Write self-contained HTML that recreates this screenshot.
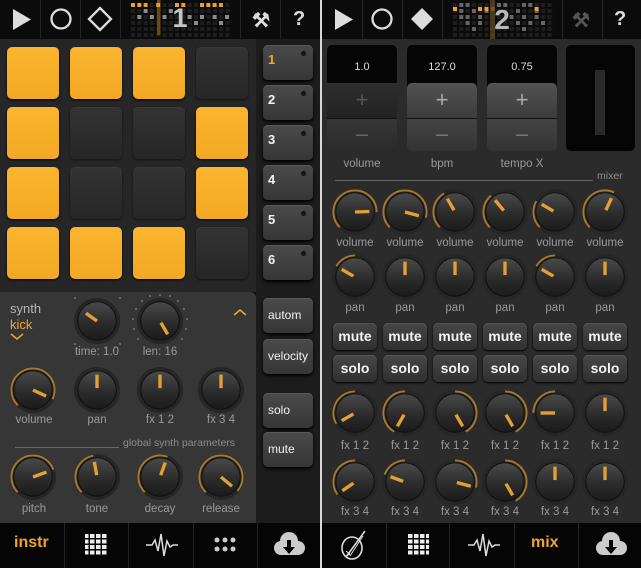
<!DOCTYPE html><html><head><meta charset="utf-8"><style>
*{margin:0;padding:0;box-sizing:border-box}
body{width:641px;height:568px;background:#111;position:relative;overflow:hidden;font-family:"Liberation Sans",sans-serif}
.a{position:absolute}
.top{position:absolute;top:0;height:39px;background:#0b0b0b}
.dv{position:absolute;top:0;width:1px;height:39px;background:#262626}
.pad{position:absolute;width:52px;height:52px;border-radius:5px}
.y{background:linear-gradient(#fbb52e,#f2a823);box-shadow:0 1px 2px #000}
.d{background:linear-gradient(#333,#262626);box-shadow:inset 0 1px 0 #3a3a3a,0 1px 2px #111}
.sb{position:absolute;left:263px;width:50px;height:35px;border-radius:5px;background:linear-gradient(#4a4a4a,#363636);box-shadow:0 2px 3px #000,inset 0 1px 0 #5a5a5a;color:#f2f2f2;font-weight:bold;font-size:13px;padding:7px 5px}
.sb i{position:absolute;right:7px;top:6px;width:5px;height:5px;border-radius:50%;background:#141414}
.sb2{font-weight:normal;font-size:12px;padding:0 5px;line-height:35px}
.k{position:absolute;width:48px;height:48px}
.l{position:absolute;color:#9a9a9a;font-size:11.5px;text-align:center;width:60px}
.bb{position:absolute;top:523px;height:45px;background:#050505}
.mb{position:absolute;width:44px;height:27px;border-radius:5px;background:linear-gradient(#474747,#303030);box-shadow:0 1px 2px #000,inset 0 1px 0 #555;color:#f4f4f4;font-weight:bold;font-size:14px;text-align:center;line-height:27px}
.box{position:absolute;top:45px;width:70px;height:106px;border-radius:5px;background:#050505;overflow:hidden}
.val{position:absolute;top:16px;width:100%;text-align:center;color:#ddd;font-size:11px}
.pm{position:absolute;left:0;width:70px;color:#aaa;font-size:22px;text-align:center}
</style></head><body>
<svg width="0" height="0" style="position:absolute"><defs>
<linearGradient id="kg" x1="0" y1="0" x2="0" y2="1"><stop offset="0" stop-color="#4a4a4a"/><stop offset="0.5" stop-color="#2e2e2e"/><stop offset="1" stop-color="#1a1a1a"/></linearGradient>
<g id="kb"><circle cx="25" cy="25" r="24" fill="#262626"/><circle cx="25" cy="25" r="20" fill="url(#kg)" stroke="#0e0e0e"/></g>
</defs></svg>

<!-- LEFT -->
<div class="a" style="left:0;top:39px;width:256px;height:253px;background:#262626"></div>
<div class="a" style="left:256px;top:39px;width:65px;height:484px;background:#1c1c1c"></div>
<div class="a" style="left:0;top:292px;width:256px;height:231px;background:#363636;border-top-right-radius:6px"></div>
<div class="top" style="left:0;width:321px"></div>
<div class="dv" style="left:40px"></div><div class="dv" style="left:80px"></div><div class="dv" style="left:120px"></div><div class="dv" style="left:240px"></div><div class="dv" style="left:280px"></div>
<svg class="a" style="left:0;top:0" width="320" height="39">
<polygon points="13,9 13,30 31,19.5" fill="#ddd"/>
<circle cx="61" cy="19" r="9.5" fill="none" stroke="#ddd" stroke-width="2.3"/>
<polygon points="100,8 111,19 100,30 89,19" fill="none" stroke="#ddd" stroke-width="2.3"/>
</svg>
<svg class="a" style="left:120px;top:0" width="120" height="39">
<defs><pattern id="gp" x="11" y="3" width="6.3" height="6" patternUnits="userSpaceOnUse"><rect width="4" height="4" fill="#1e1e1e"/></pattern></defs>
<rect x="11" y="3" width="101" height="36" fill="url(#gp)"/>
<rect x="37" y="0" width="3.5" height="35" fill="#6b4a16"/>
<g fill="#e9a12c"><rect x="11" y="3" width="4" height="4"/><rect x="17.3" y="3" width="4" height="4"/><rect x="23.6" y="3" width="4" height="4"/><rect x="36.2" y="3" width="4" height="4"/><rect x="55" y="3" width="4" height="4"/><rect x="61.3" y="3" width="4" height="4"/><rect x="80" y="3" width="4" height="4"/><rect x="86.3" y="3" width="4" height="4"/><rect x="92.6" y="3" width="4" height="4"/><rect x="98.9" y="3" width="4" height="4"/></g>
<g fill="#8a8a8a"><rect x="23.6" y="9" width="4" height="4"/><rect x="48.8" y="9" width="4" height="4"/><rect x="17.3" y="15" width="4" height="4"/><rect x="29.9" y="15" width="4" height="4"/><rect x="42.5" y="15" width="4" height="4"/><rect x="67.6" y="15" width="4" height="4"/><rect x="80" y="15" width="4" height="4"/><rect x="92.6" y="15" width="4" height="4"/><rect x="105" y="15" width="4" height="4"/><rect x="74" y="21" width="4" height="4"/><rect x="99" y="21" width="4" height="4"/></g>
<text x="60" y="27" text-anchor="middle" fill="#c4c4c4" font-size="27" font-weight="bold" font-family="Liberation Sans">1</text>
</svg>
<div class="a" style="left:252px;top:8px;color:#ddd;font-size:20px;font-weight:bold">⚒</div>
<div class="a" style="left:293px;top:8px;color:#ddd;font-size:20px;font-weight:bold">?</div>

<div class="pad y" style="left:7px;top:47px"></div><div class="pad y" style="left:70px;top:47px"></div><div class="pad y" style="left:133px;top:47px"></div><div class="pad d" style="left:196px;top:47px"></div>
<div class="pad y" style="left:7px;top:107px"></div><div class="pad d" style="left:70px;top:107px"></div><div class="pad d" style="left:133px;top:107px"></div><div class="pad y" style="left:196px;top:107px"></div>
<div class="pad y" style="left:7px;top:167px"></div><div class="pad d" style="left:70px;top:167px"></div><div class="pad d" style="left:133px;top:167px"></div><div class="pad y" style="left:196px;top:167px"></div>
<div class="pad y" style="left:7px;top:227px"></div><div class="pad y" style="left:70px;top:227px"></div><div class="pad y" style="left:133px;top:227px"></div><div class="pad d" style="left:196px;top:227px"></div>

<div class="sb" style="top:45px;color:#f2a82a">1<i></i></div>
<div class="sb" style="top:85px">2<i></i></div>
<div class="sb" style="top:125px">3<i></i></div>
<div class="sb" style="top:165px">4<i></i></div>
<div class="sb" style="top:205px">5<i></i></div>
<div class="sb" style="top:245px">6<i></i></div>
<div class="sb sb2" style="top:298px">autom</div>
<div class="sb sb2" style="top:339px">velocity</div>
<div class="sb sb2" style="top:393px">solo</div>
<div class="sb sb2" style="top:432px">mute</div>

<div class="a" style="left:10px;top:301px;color:#b5b5b5;font-size:13px">synth</div>
<div class="a" style="left:10px;top:317px;color:#f0a52a;font-size:13px">kick</div>
<svg class="a" style="left:10px;top:333px" width="14" height="8"><polyline points="1,1 7,6 13,1" fill="none" stroke="#f0a52a" stroke-width="1.5"/></svg>
<svg class="a" style="left:233px;top:308px" width="14" height="8"><polyline points="1,7 7,2 13,7" fill="none" stroke="#f0a52a" stroke-width="1.5"/></svg>

<svg class="a" style="left:66px;top:292px" width="62" height="60"><g fill="#777"><circle cx="9" cy="6" r="1"/><circle cx="54" cy="6" r="1"/><circle cx="9" cy="52" r="1"/><circle cx="54" cy="52" r="1"/></g></svg>
<svg class="a" style="left:128px;top:292px" width="64" height="62"><g fill="#777"><circle cx="32" cy="3" r="1"/><circle cx="22" cy="4" r="1"/><circle cx="42" cy="4" r="1"/><circle cx="14" cy="9" r="1"/><circle cx="50" cy="9" r="1"/><circle cx="8" cy="17" r="1"/><circle cx="56" cy="17" r="1"/><circle cx="5" cy="27" r="1"/><circle cx="59" cy="27" r="1"/><circle cx="6" cy="37" r="1"/><circle cx="58" cy="37" r="1"/><circle cx="10" cy="47" r="1"/><circle cx="54" cy="47" r="1"/></g></svg>
<svg class="k" style="left:73px;top:297px" viewBox="0 0 50 50"><use href="#kb"/><line x1="25" y1="25" x2="25" y2="11" stroke="#e3a033" stroke-width="3.5" transform="rotate(-55 25 25)"/></svg>
<svg class="k" style="left:136px;top:297px" viewBox="0 0 50 50"><use href="#kb"/><line x1="25" y1="23" x2="25" y2="9" stroke="#e3a033" stroke-width="3.5" transform="rotate(150 25 25)"/></svg>
<div class="l" style="left:67px;top:346px">time: 1.0</div><div class="l" style="left:130px;top:346px">len: 16</div>

<svg class="k" style="left:9px;top:366px" viewBox="0 0 50 50"><use href="#kb"/><circle cx="25" cy="25" r="22.5" fill="none" stroke="#a57a2c" stroke-width="2" stroke-dasharray="98.2 300" transform="rotate(-225 25 25)"/><line x1="25" y1="25" x2="25" y2="10" stroke="#e3a033" stroke-width="3.5" transform="rotate(115 25 25)"/></svg>
<svg class="k" style="left:73px;top:366px" viewBox="0 0 50 50"><use href="#kb"/><line x1="25" y1="23" x2="25" y2="9" stroke="#e3a033" stroke-width="3.5"/></svg>
<svg class="k" style="left:136px;top:366px" viewBox="0 0 50 50"><use href="#kb"/><line x1="25" y1="23" x2="25" y2="9" stroke="#e3a033" stroke-width="3.5"/></svg>
<svg class="k" style="left:197px;top:366px" viewBox="0 0 50 50"><use href="#kb"/><line x1="25" y1="23" x2="25" y2="9" stroke="#e3a033" stroke-width="3.5"/></svg>
<div class="l" style="left:4px;top:414px">volume</div><div class="l" style="left:67px;top:414px">pan</div><div class="l" style="left:130px;top:414px">fx 1 2</div><div class="l" style="left:191px;top:414px">fx 3 4</div>

<div class="a" style="left:15px;top:447px;width:104px;height:1px;background:#666"></div>
<div class="a" style="left:123px;top:437px;color:#8d8d8d;font-size:10.5px">global synth parameters</div>

<svg class="k" style="left:9px;top:453px" viewBox="0 0 50 50"><use href="#kb"/><circle cx="25" cy="25" r="22.5" fill="none" stroke="#a57a2c" stroke-width="2" stroke-dasharray="80.5 300" transform="rotate(-225 25 25)"/><line x1="25" y1="25" x2="25" y2="10" stroke="#e3a033" stroke-width="3.5" transform="rotate(70 25 25)"/></svg>
<svg class="k" style="left:73px;top:453px" viewBox="0 0 50 50"><use href="#kb"/><circle cx="25" cy="25" r="22.5" fill="none" stroke="#a57a2c" stroke-width="2" stroke-dasharray="49.1 300" transform="rotate(-225 25 25)"/><line x1="25" y1="23" x2="25" y2="9" stroke="#e3a033" stroke-width="3.5" transform="rotate(-10 25 25)"/></svg>
<svg class="k" style="left:136px;top:453px" viewBox="0 0 50 50"><use href="#kb"/><circle cx="25" cy="25" r="22.5" fill="none" stroke="#a57a2c" stroke-width="2" stroke-dasharray="60.9 300" transform="rotate(-225 25 25)"/><line x1="25" y1="23" x2="25" y2="9" stroke="#e3a033" stroke-width="3.5" transform="rotate(20 25 25)"/></svg>
<svg class="k" style="left:197px;top:453px" viewBox="0 0 50 50"><use href="#kb"/><circle cx="25" cy="25" r="22.5" fill="none" stroke="#a57a2c" stroke-width="2" stroke-dasharray="104.1 300" transform="rotate(-225 25 25)"/><line x1="25" y1="25" x2="25" y2="10" stroke="#e3a033" stroke-width="3.5" transform="rotate(130 25 25)"/></svg>
<div class="l" style="left:4px;top:503px">pitch</div><div class="l" style="left:67px;top:503px">tone</div><div class="l" style="left:130px;top:503px">decay</div><div class="l" style="left:191px;top:503px">release</div>

<div class="a" style="left:320px;top:0;width:2px;height:568px;background:#d8d8d8"></div>

<!-- RIGHT -->
<div class="a" style="left:322px;top:39px;width:319px;height:484px;background:#2b2b2b"></div>
<div class="top" style="left:322px;width:319px"></div>
<div class="dv" style="left:362px"></div><div class="dv" style="left:402px"></div><div class="dv" style="left:442px"></div><div class="dv" style="left:562px"></div><div class="dv" style="left:602px"></div>
<svg class="a" style="left:322px;top:0" width="120" height="39">
<polygon points="13,9 13,30 31,19.5" fill="#ddd"/>
<circle cx="60" cy="19" r="9.5" fill="none" stroke="#ddd" stroke-width="2.3"/>
<polygon points="100,8 111,19 100,30 89,19" fill="#ddd"/>
</svg>
<svg class="a" style="left:442px;top:0" width="120" height="39">
<rect x="11" y="3" width="101" height="36" fill="url(#gp)"/>
<g fill="#666"><rect x="17.3" y="3" width="4" height="4"/><rect x="23.6" y="3" width="4" height="4"/><rect x="55" y="3" width="4" height="4"/><rect x="61.3" y="3" width="4" height="4"/><rect x="80" y="3" width="4" height="4"/><rect x="86.3" y="3" width="4" height="4"/><rect x="17.3" y="9" width="4" height="4"/><rect x="29.9" y="9" width="4" height="4"/><rect x="42.5" y="9" width="4" height="4"/><rect x="74" y="9" width="4" height="4"/><rect x="92.6" y="9" width="4" height="4"/><rect x="17.3" y="15" width="4" height="4"/><rect x="23.6" y="15" width="4" height="4"/><rect x="36" y="15" width="4" height="4"/><rect x="67.6" y="15" width="4" height="4"/><rect x="80" y="15" width="4" height="4"/><rect x="92.6" y="15" width="4" height="4"/><rect x="23.6" y="21" width="4" height="4"/><rect x="36" y="21" width="4" height="4"/><rect x="74" y="21" width="4" height="4"/><rect x="86.3" y="21" width="4" height="4"/><rect x="99" y="21" width="4" height="4"/><rect x="29.9" y="27" width="4" height="4"/><rect x="80" y="27" width="4" height="4"/></g>
<g fill="#e9a12c"><rect x="11" y="7" width="4" height="4"/><rect x="36" y="7" width="4" height="4"/><rect x="42.5" y="7" width="4" height="4"/><rect x="48.8" y="7" width="4" height="4"/><rect x="92.6" y="7" width="4" height="4"/></g>
<rect x="48" y="0" width="5" height="39" fill="#5a4420" opacity="0.8"/>
<text x="60" y="29" text-anchor="middle" fill="#b8b8b8" font-size="28" font-weight="bold" font-family="Liberation Sans">2</text>
</svg>
<div class="a" style="left:572px;top:8px;color:#555;font-size:20px;font-weight:bold">⚒</div>
<div class="a" style="left:614px;top:8px;color:#ddd;font-size:20px;font-weight:bold">?</div>

<div class="box" style="left:327px"><div class="val">1.0</div>
<div class="a" style="left:0;top:38px;width:70px;height:35px;background:linear-gradient(#2e2e2e,#222)"></div><div class="pm" style="top:42px;color:#555">+</div>
<div class="a" style="left:0;top:73px;width:70px;height:33px;background:linear-gradient(#363636,#2b2b2b);border-top:1px solid #111"></div><div class="pm" style="top:76px;color:#666">–</div></div>
<div class="box" style="left:407px"><div class="val">127.0</div>
<div class="a" style="left:0;top:38px;width:70px;height:35px;border-radius:5px 5px 0 0;background:linear-gradient(#525252,#3c3c3c)"></div><div class="pm" style="top:42px">+</div>
<div class="a" style="left:0;top:73px;width:70px;height:33px;background:linear-gradient(#444,#333);border-top:1px solid #111"></div><div class="pm" style="top:76px;color:#777">–</div></div>
<div class="box" style="left:487px"><div class="val">0.75</div>
<div class="a" style="left:0;top:38px;width:70px;height:35px;border-radius:5px 5px 0 0;background:linear-gradient(#525252,#3c3c3c)"></div><div class="pm" style="top:42px">+</div>
<div class="a" style="left:0;top:73px;width:70px;height:33px;background:linear-gradient(#444,#333);border-top:1px solid #111"></div><div class="pm" style="top:76px;color:#777">–</div></div>
<div class="box" style="left:566px;width:69px"><div class="a" style="left:29px;top:25px;width:10px;height:65px;background:#2a2a2a"></div></div>
<div class="l" style="left:332px;top:158px">volume</div><div class="l" style="left:412px;top:158px">bpm</div><div class="l" style="left:492px;top:158px">tempo X</div>
<div class="a" style="left:335px;top:180px;width:258px;height:1px;background:#666"></div>
<div class="a" style="left:597px;top:170px;color:#8d8d8d;font-size:10.5px">mixer</div>

<svg class="k" style="left:331px;top:188px" viewBox="0 0 50 50"><use href="#kb"/><circle cx="25" cy="25" r="22.5" fill="none" stroke="#a57a2c" stroke-width="2" stroke-dasharray="88.4 300" transform="rotate(-225 25 25)"/><line x1="25" y1="25" x2="25" y2="10" stroke="#e3a033" stroke-width="3.5" transform="rotate(88 25 25)"/></svg>
<svg class="k" style="left:381px;top:188px" viewBox="0 0 50 50"><use href="#kb"/><circle cx="25" cy="25" r="22.5" fill="none" stroke="#a57a2c" stroke-width="2" stroke-dasharray="94.2 300" transform="rotate(-225 25 25)"/><line x1="25" y1="25" x2="25" y2="10" stroke="#e3a033" stroke-width="3.5" transform="rotate(105 25 25)"/></svg>
<svg class="k" style="left:431px;top:188px" viewBox="0 0 50 50"><use href="#kb"/><circle cx="25" cy="25" r="22.5" fill="none" stroke="#a57a2c" stroke-width="2" stroke-dasharray="41.2 300" transform="rotate(-225 25 25)"/><line x1="25" y1="23" x2="25" y2="9" stroke="#e3a033" stroke-width="3.5" transform="rotate(-30 25 25)"/></svg>
<svg class="k" style="left:481px;top:188px" viewBox="0 0 50 50"><use href="#kb"/><circle cx="25" cy="25" r="22.5" fill="none" stroke="#a57a2c" stroke-width="2" stroke-dasharray="37.3 300" transform="rotate(-225 25 25)"/><line x1="25" y1="23" x2="25" y2="9" stroke="#e3a033" stroke-width="3.5" transform="rotate(-40 25 25)"/></svg>
<svg class="k" style="left:531px;top:188px" viewBox="0 0 50 50"><use href="#kb"/><circle cx="25" cy="25" r="22.5" fill="none" stroke="#a57a2c" stroke-width="2" stroke-dasharray="29.5 300" transform="rotate(-225 25 25)"/><line x1="25" y1="23" x2="25" y2="9" stroke="#e3a033" stroke-width="3.5" transform="rotate(-60 25 25)"/></svg>
<svg class="k" style="left:581px;top:188px" viewBox="0 0 50 50"><use href="#kb"/><circle cx="25" cy="25" r="22.5" fill="none" stroke="#a57a2c" stroke-width="2" stroke-dasharray="62.8 300" transform="rotate(-225 25 25)"/><line x1="25" y1="23" x2="25" y2="9" stroke="#e3a033" stroke-width="3.5" transform="rotate(25 25 25)"/></svg>
<div class="l" style="left:325px;top:237px">volume</div><div class="l" style="left:375px;top:237px">volume</div><div class="l" style="left:425px;top:237px">volume</div><div class="l" style="left:475px;top:237px">volume</div><div class="l" style="left:525px;top:237px">volume</div><div class="l" style="left:575px;top:237px">volume</div>

<svg class="k" style="left:331px;top:253px" viewBox="0 0 50 50"><use href="#kb"/><circle cx="25" cy="25" r="22.5" fill="none" stroke="#a57a2c" stroke-width="2" stroke-dasharray="23.6 300" transform="rotate(-150 25 25)"/><line x1="25" y1="23" x2="25" y2="9" stroke="#e3a033" stroke-width="3.5" transform="rotate(-60 25 25)"/></svg>
<svg class="k" style="left:381px;top:253px" viewBox="0 0 50 50"><use href="#kb"/><line x1="25" y1="23" x2="25" y2="9" stroke="#e3a033" stroke-width="3.5"/></svg>
<svg class="k" style="left:431px;top:253px" viewBox="0 0 50 50"><use href="#kb"/><line x1="25" y1="23" x2="25" y2="9" stroke="#e3a033" stroke-width="3.5"/></svg>
<svg class="k" style="left:481px;top:253px" viewBox="0 0 50 50"><use href="#kb"/><line x1="25" y1="23" x2="25" y2="9" stroke="#e3a033" stroke-width="3.5"/></svg>
<svg class="k" style="left:531px;top:253px" viewBox="0 0 50 50"><use href="#kb"/><circle cx="25" cy="25" r="22.5" fill="none" stroke="#a57a2c" stroke-width="2" stroke-dasharray="23.6 300" transform="rotate(-150 25 25)"/><line x1="25" y1="23" x2="25" y2="9" stroke="#e3a033" stroke-width="3.5" transform="rotate(-60 25 25)"/></svg>
<svg class="k" style="left:581px;top:253px" viewBox="0 0 50 50"><use href="#kb"/><line x1="25" y1="23" x2="25" y2="9" stroke="#e3a033" stroke-width="3.5"/></svg>
<div class="l" style="left:325px;top:302px">pan</div><div class="l" style="left:375px;top:302px">pan</div><div class="l" style="left:425px;top:302px">pan</div><div class="l" style="left:475px;top:302px">pan</div><div class="l" style="left:525px;top:302px">pan</div><div class="l" style="left:575px;top:302px">pan</div>

<div class="mb" style="left:333px;top:323px">mute</div><div class="mb" style="left:383px;top:323px">mute</div><div class="mb" style="left:433px;top:323px">mute</div><div class="mb" style="left:483px;top:323px">mute</div><div class="mb" style="left:533px;top:323px">mute</div><div class="mb" style="left:583px;top:323px">mute</div>
<div class="mb" style="left:333px;top:355px">solo</div><div class="mb" style="left:383px;top:355px">solo</div><div class="mb" style="left:433px;top:355px">solo</div><div class="mb" style="left:483px;top:355px">solo</div><div class="mb" style="left:533px;top:355px">solo</div><div class="mb" style="left:583px;top:355px">solo</div>

<svg class="k" style="left:331px;top:389px" viewBox="0 0 50 50"><use href="#kb"/><circle cx="25" cy="25" r="22.5" fill="none" stroke="#a57a2c" stroke-width="2" stroke-dasharray="47.1 300" transform="rotate(-210 25 25)"/><line x1="25" y1="23" x2="25" y2="9" stroke="#e3a033" stroke-width="3.5" transform="rotate(-120 25 25)"/></svg>
<svg class="k" style="left:381px;top:389px" viewBox="0 0 50 50"><use href="#kb"/><circle cx="25" cy="25" r="22.5" fill="none" stroke="#a57a2c" stroke-width="2" stroke-dasharray="58.9 300" transform="rotate(-240 25 25)"/><line x1="25" y1="23" x2="25" y2="9" stroke="#e3a033" stroke-width="3.5" transform="rotate(-150 25 25)"/></svg>
<svg class="k" style="left:431px;top:389px" viewBox="0 0 50 50"><use href="#kb"/><circle cx="25" cy="25" r="22.5" fill="none" stroke="#a57a2c" stroke-width="2" stroke-dasharray="58.9 300" transform="rotate(-90 25 25)"/><line x1="25" y1="23" x2="25" y2="9" stroke="#e3a033" stroke-width="3.5" transform="rotate(150 25 25)"/></svg>
<svg class="k" style="left:481px;top:389px" viewBox="0 0 50 50"><use href="#kb"/><circle cx="25" cy="25" r="22.5" fill="none" stroke="#a57a2c" stroke-width="2" stroke-dasharray="58.9 300" transform="rotate(-90 25 25)"/><line x1="25" y1="23" x2="25" y2="9" stroke="#e3a033" stroke-width="3.5" transform="rotate(150 25 25)"/></svg>
<svg class="k" style="left:531px;top:389px" viewBox="0 0 50 50"><use href="#kb"/><circle cx="25" cy="25" r="22.5" fill="none" stroke="#a57a2c" stroke-width="2" stroke-dasharray="35.3 300" transform="rotate(-180 25 25)"/><line x1="25" y1="25" x2="25" y2="10" stroke="#e3a033" stroke-width="3.5" transform="rotate(-90 25 25)"/></svg>
<svg class="k" style="left:581px;top:389px" viewBox="0 0 50 50"><use href="#kb"/><line x1="25" y1="23" x2="25" y2="9" stroke="#e3a033" stroke-width="3.5"/></svg>
<div class="l" style="left:325px;top:440px">fx 1 2</div><div class="l" style="left:375px;top:440px">fx 1 2</div><div class="l" style="left:425px;top:440px">fx 1 2</div><div class="l" style="left:475px;top:440px">fx 1 2</div><div class="l" style="left:525px;top:440px">fx 1 2</div><div class="l" style="left:575px;top:440px">fx 1 2</div>

<svg class="k" style="left:331px;top:458px" viewBox="0 0 50 50"><use href="#kb"/><circle cx="25" cy="25" r="22.5" fill="none" stroke="#a57a2c" stroke-width="2" stroke-dasharray="49.1 300" transform="rotate(-215 25 25)"/><line x1="25" y1="23" x2="25" y2="9" stroke="#e3a033" stroke-width="3.5" transform="rotate(-125 25 25)"/></svg>
<svg class="k" style="left:381px;top:458px" viewBox="0 0 50 50"><use href="#kb"/><circle cx="25" cy="25" r="22.5" fill="none" stroke="#a57a2c" stroke-width="2" stroke-dasharray="27.5 300" transform="rotate(-160 25 25)"/><line x1="25" y1="23" x2="25" y2="9" stroke="#e3a033" stroke-width="3.5" transform="rotate(-70 25 25)"/></svg>
<svg class="k" style="left:431px;top:458px" viewBox="0 0 50 50"><use href="#kb"/><circle cx="25" cy="25" r="22.5" fill="none" stroke="#a57a2c" stroke-width="2" stroke-dasharray="41.2 300" transform="rotate(-90 25 25)"/><line x1="25" y1="23" x2="25" y2="8" stroke="#e3a033" stroke-width="3.5" transform="rotate(105 25 25)"/></svg>
<svg class="k" style="left:481px;top:458px" viewBox="0 0 50 50"><use href="#kb"/><circle cx="25" cy="25" r="22.5" fill="none" stroke="#a57a2c" stroke-width="2" stroke-dasharray="58.9 300" transform="rotate(-90 25 25)"/><line x1="25" y1="23" x2="25" y2="9" stroke="#e3a033" stroke-width="3.5" transform="rotate(150 25 25)"/></svg>
<svg class="k" style="left:531px;top:458px" viewBox="0 0 50 50"><use href="#kb"/><line x1="25" y1="23" x2="25" y2="9" stroke="#e3a033" stroke-width="3.5"/></svg>
<svg class="k" style="left:581px;top:458px" viewBox="0 0 50 50"><use href="#kb"/><line x1="25" y1="23" x2="25" y2="9" stroke="#e3a033" stroke-width="3.5"/></svg>
<div class="l" style="left:325px;top:506px">fx 3 4</div><div class="l" style="left:375px;top:506px">fx 3 4</div><div class="l" style="left:425px;top:506px">fx 3 4</div><div class="l" style="left:475px;top:506px">fx 3 4</div><div class="l" style="left:525px;top:506px">fx 3 4</div><div class="l" style="left:575px;top:506px">fx 3 4</div>

<div class="bb" style="left:0;width:320px"></div><div class="bb" style="left:322px;width:319px"></div>
<div class="a" style="left:64px;top:523px;width:1px;height:45px;background:#222"></div><div class="a" style="left:128px;top:523px;width:1px;height:45px;background:#222"></div><div class="a" style="left:193px;top:523px;width:1px;height:45px;background:#222"></div><div class="a" style="left:257px;top:523px;width:1px;height:45px;background:#222"></div>
<div class="a" style="left:386px;top:523px;width:1px;height:45px;background:#222"></div><div class="a" style="left:449px;top:523px;width:1px;height:45px;background:#222"></div><div class="a" style="left:514px;top:523px;width:1px;height:45px;background:#222"></div><div class="a" style="left:578px;top:523px;width:1px;height:45px;background:#222"></div>
<div class="a" style="left:14px;top:534px;color:#f0a52a;font-size:16px;font-weight:bold">instr</div>
<div class="a" style="left:531px;top:534px;color:#f0a52a;font-size:16px;font-weight:bold">mix</div>
<svg class="a" style="left:0;top:523px" width="641" height="45">
<defs><pattern id="gr" x="0" y="0" width="6" height="5.5" patternUnits="userSpaceOnUse"><rect width="4.5" height="4" fill="#eee"/></pattern></defs>
<rect x="85" y="11" width="22" height="22" fill="url(#gr)"/>
<rect x="407" y="11" width="22" height="22" fill="url(#gr)"/>
<polyline points="146,22 152,22 155,17 158,28 161,11 164,33 167,18 170,24 173,22 178,22" fill="none" stroke="#ddd" stroke-width="1.5"/>
<polyline points="468,22 474,22 477,17 480,28 483,11 486,33 489,18 492,24 495,22 500,22" fill="none" stroke="#ddd" stroke-width="1.5"/>
<g fill="#ccc"><circle cx="217" cy="17" r="2.5"/><circle cx="225" cy="17" r="2.5"/><circle cx="233" cy="17" r="2.5"/><circle cx="217" cy="26" r="2.5"/><circle cx="225" cy="26" r="2.5"/><circle cx="233" cy="26" r="2.5"/></g>
<g fill="#ccc"><circle cx="281" cy="25" r="7"/><circle cx="289" cy="18" r="9"/><circle cx="298" cy="25" r="7"/><rect x="281" y="24" width="17" height="8"/></g>
<path d="M287,17 h4 v7 h4 l-6,7 l-6,-7 h4z" fill="#050505"/>
<g transform="translate(322,0)"><g fill="#ccc"><circle cx="281" cy="25" r="7"/><circle cx="289" cy="18" r="9"/><circle cx="298" cy="25" r="7"/><rect x="281" y="24" width="17" height="8"/></g>
<path d="M287,17 h4 v7 h4 l-6,7 l-6,-7 h4z" fill="#050505"/></g>
<ellipse cx="352" cy="25" rx="10" ry="11" fill="none" stroke="#ddd" stroke-width="1.6"/>
<line x1="346" y1="34" x2="365" y2="8" stroke="#ddd" stroke-width="1.5"/><line x1="350" y1="33" x2="363" y2="13" stroke="#ddd" stroke-width="1"/>
<path d="M346,28 l4,3 M347,31 l3,1" stroke="#ddd" stroke-width="1"/>
</svg>
</body></html>
